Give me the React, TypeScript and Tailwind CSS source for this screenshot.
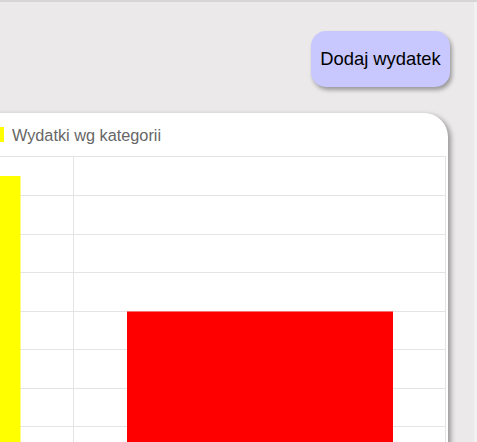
import React from "react";

export default function App() {
  const hLines = [0.5, 39.5, 78.5, 116.5, 155.5, 193.5, 232.5, 270.5];
  return (
    <div
      className="h-[442px] w-full overflow-hidden bg-[#ebe9e9] border-t-2 border-[#d6d6d6] flex"
      style={{ fontFamily: '"Liberation Sans", Arial, sans-serif' }}
    >
      <div className="flex-1 min-w-0 pt-[29px]">
        <div className="flex justify-end pr-[24px]">
          <button className="h-[56px] w-[139px] rounded-[15px] bg-[#c8c8ff] text-[18.4px] text-black shadow-[2px_3px_4px_rgba(0,0,0,0.35)]">
            Dodaj wydatek
          </button>
        </div>
        <div className="mt-[26px] ml-[-320px] w-[768px] h-[400px] bg-white rounded-tr-[24px] shadow-[3px_2px_5px_rgba(0,0,0,0.35)]">
          <div className="pt-[14px] pr-[3px] flex justify-center">
            <div className="flex items-center gap-[8px] h-[15px]">
              <div className="w-[40px] h-[15px] bg-[#ffff00]" />
              <span className="text-[16.3px] leading-[18px] text-[#666666]">Wydatki wg kategorii</span>
            </div>
          </div>
          <svg className="mt-[14px] block" width="768" height="300" viewBox="0 0 768 300">
            {hLines.map((y) => (
              <line key={y} x1="0" x2="766" y1={y} y2={y} stroke="#e4e4e4" strokeWidth="1" />
            ))}
            <line x1="393.5" x2="393.5" y1="0" y2="300" stroke="#e4e4e4" strokeWidth="1" />
            <line x1="765.5" x2="765.5" y1="0" y2="300" stroke="#e4e4e4" strokeWidth="1" />
            <rect x="76" y="20" width="264.5" height="290" fill="#ffff00" />
            <rect x="447" y="155.5" width="266" height="150" fill="#ff0000" />
          </svg>
        </div>
      </div>
      <div className="w-[3px] bg-[#f1f1f1]" />
    </div>
  );
}
